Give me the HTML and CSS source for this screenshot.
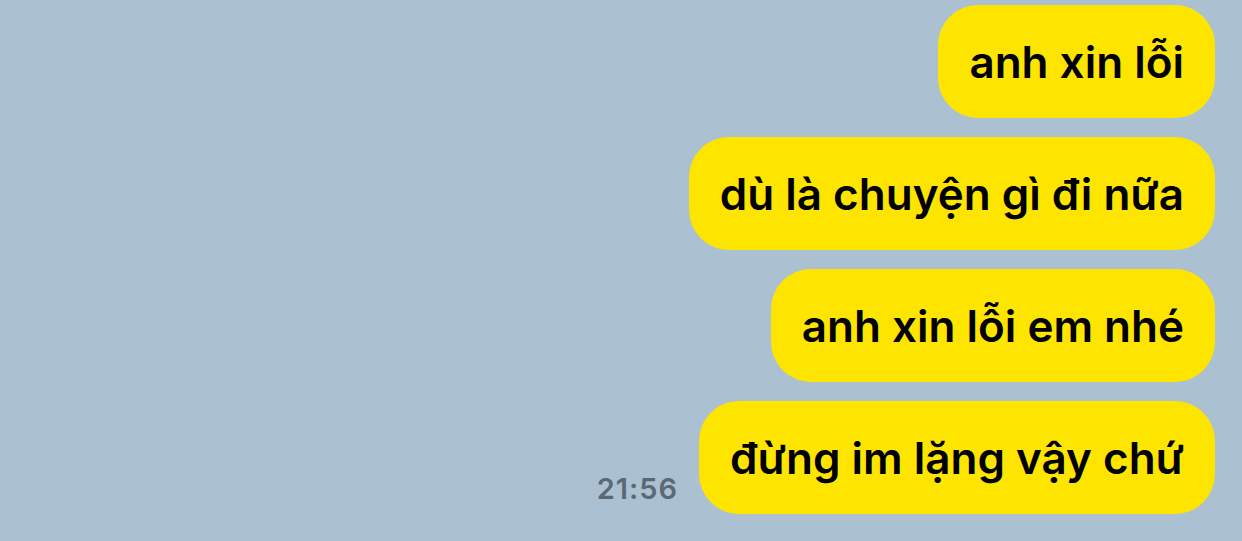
FILE: index.html
```html
<!DOCTYPE html>
<html lang="vi">
<head>
<meta charset="utf-8">
<link rel="stylesheet" href="styles.css">
</head>
<body>
<div class="chat">
  <div class="row"><div class="bubble">anh xin lỗi</div></div>
  <div class="row"><div class="bubble">dù là chuyện gì đi nữa</div></div>
  <div class="row"><div class="bubble">anh xin lỗi em nhé</div></div>
  <div class="row"><span class="time">21:56</span><div class="bubble">đừng im lặng vậy chứ</div></div>
</div>
</body>
</html>
```
FILE: styles.css
```css
html, body {
  margin: 0;
  padding: 0;
  background: #abc0d1;
  height: 100%;
  overflow: hidden;
}
.chat {
  display: flex;
  flex-direction: column;
  align-items: flex-end;
  gap: 19px;
  padding: 5px 27px 0 0;
  font-family: Inter, "Noto Sans", sans-serif;
}
.row {
  display: flex;
  align-items: flex-end;
  gap: 21px;
}
.bubble {
  background: #fee500;
  color: #000;
  height: 113px;
  box-sizing: border-box;
  display: flex;
  align-items: center;
  padding: 0 31px;
  border-radius: 40px;
  font-size: 44px;
  font-weight: 600;
  white-space: nowrap;
}
.time {
  color: #5b6975;
  font-size: 29px;
  font-weight: 600;
  letter-spacing: 1px;
  line-height: 1;
  padding-bottom: 11px;
}
```
